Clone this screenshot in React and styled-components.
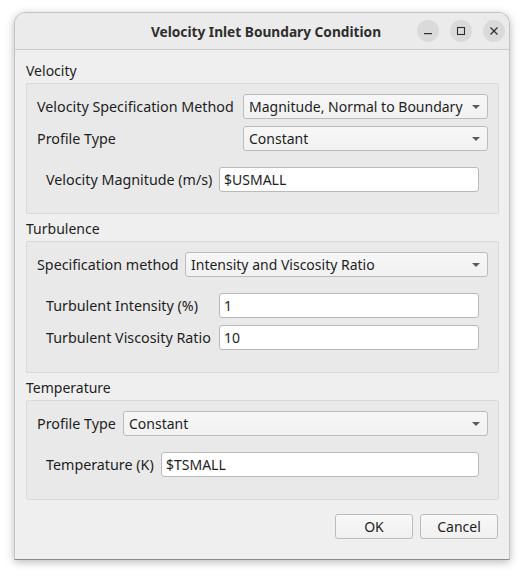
import React from "react";
import styled, { createGlobalStyle } from "styled-components";

const GlobalStyle = createGlobalStyle`
  html, body {
    margin: 0;
    padding: 0;
    background: #ffffff;
  }
  body {
    font-family: "Noto Sans", "DejaVu Sans", sans-serif;
    font-size: 14px;
    color: #1e1e1e;
  }
`;

const Screen = styled.div`
  padding: 12px 18px 17px 14px;
`;

const Window = styled.div`
  width: 496px;
  height: 548px;
  background: #efefef;
  border-radius: 12px 12px 0 0;
  border: 1px solid #c4c4c4;
  border-bottom-color: #8a8a8a;
  box-sizing: border-box;
  box-shadow: 0 2px 8px rgba(0, 0, 0, 0.28);
  display: flex;
  flex-direction: column;
  overflow: hidden;
`;

const TitleBar = styled.div`
  height: 36px;
  flex: none;
  background: #ebebeb;
  border-bottom: 1px solid #cdcdcd;
  position: relative;
  display: flex;
  align-items: center;
  justify-content: center;
`;

const Title = styled.div`
  font-weight: 700;
  font-size: 13.7px;
  color: #2e2e2e;
  margin-left: 8px;
`;

const Controls = styled.div`
  position: absolute;
  right: 4px;
  top: 7px;
  display: flex;
  gap: 11px;
`;

const CtrlButton = styled.div`
  width: 22px;
  height: 22px;
  border-radius: 50%;
  background: #dadada;
  display: flex;
  align-items: center;
  justify-content: center;
  color: #2e2e2e;
`;

const Body = styled.div`
  flex: 1;
  padding: 11px 10px 0 10px;
  display: flex;
  flex-direction: column;
`;

const SectionLabel = styled.div`
  height: 22px;
  line-height: 20px;
  padding-left: 1px;
`;

const Group = styled.div`
  background: #e9e9e9;
  border: 1px solid #d9d9d9;
  border-radius: 2px;
  margin: 0 0 5px 1px;
  padding: ${(p) => p.$pad || "10px 10px 10px 10px"};
  height: ${(p) => p.$h}px;
  box-sizing: border-box;
  display: flex;
  flex-direction: column;
`;

const Row = styled.div`
  display: flex;
  align-items: center;
  height: 25px;
  margin-bottom: ${(p) => p.$mb || 0}px;
  padding-left: ${(p) => p.$indent || 0}px;
  padding-right: ${(p) => p.$right || 0}px;
`;

const Label = styled.div`
  width: ${(p) => p.$w}px;
  flex: none;
  white-space: nowrap;
  font-size: 14.3px;
`;

const Combo = styled.div`
  flex: 1;
  height: 25px;
  box-sizing: border-box;
  border: 1px solid #bcbcbc;
  border-radius: 3px;
  background: linear-gradient(#f7f7f7, #f1f1f1);
  display: flex;
  align-items: center;
  padding: 0 6px 0 5px;
  justify-content: space-between;
`;

const Arrow = styled.div`
  width: 0;
  height: 0;
  border-left: 4px solid transparent;
  border-right: 4px solid transparent;
  border-top: 4px solid #5a5a5a;
  margin-right: 1px;
`;

const Input = styled.div`
  flex: 1;
  height: 25px;
  box-sizing: border-box;
  border: 1px solid #b9b9b9;
  border-radius: 3px;
  background: #ffffff;
  display: flex;
  align-items: center;
  padding-left: 4px;
`;

const Footer = styled.div`
  display: flex;
  justify-content: flex-end;
  gap: 7px;
  padding: 9px 1px 0 0;
`;

const Button = styled.div`
  width: 78px;
  height: 25px;
  box-sizing: border-box;
  border: 1px solid #bcbcbc;
  border-radius: 3px;
  background: linear-gradient(#f8f8f8, #f0f0f0);
  display: flex;
  align-items: center;
  justify-content: center;
`;

const ComboBox = ({ children }) => (
  <Combo>
    <span>{children}</span>
    <Arrow />
  </Combo>
);

export default function App() {
  return (
    <Screen>
      <GlobalStyle />
      <Window>
        <TitleBar>
          <Title>Velocity Inlet Boundary Condition</Title>
          <Controls>
            <CtrlButton>
              <svg width="10" height="10" viewBox="0 0 10 10">
                <rect x="1" y="7" width="8" height="1.2" fill="currentColor" />
              </svg>
            </CtrlButton>
            <CtrlButton>
              <svg width="10" height="10" viewBox="0 0 10 10">
                <rect x="1.5" y="1.5" width="7" height="7" fill="none" stroke="currentColor" strokeWidth="1.1" />
              </svg>
            </CtrlButton>
            <CtrlButton>
              <svg width="10" height="10" viewBox="0 0 10 10">
                <path d="M1.5 1.5 L8.5 8.5 M8.5 1.5 L1.5 8.5" stroke="currentColor" strokeWidth="1.2" />
              </svg>
            </CtrlButton>
          </Controls>
        </TitleBar>
        <Body>
          <SectionLabel>Velocity</SectionLabel>
          <Group $h={131} $pad="10px 10px 0 10px">
            <Row $mb={7}>
              <Label $w={206}>Velocity Specification Method</Label>
              <ComboBox>Magnitude, Normal to Boundary</ComboBox>
            </Row>
            <Row $mb={16}>
              <Label $w={206}>Profile Type</Label>
              <ComboBox>Constant</ComboBox>
            </Row>
            <Row $indent={9} $right={9}>
              <Label $w={173}>Velocity Magnitude (m/s)</Label>
              <Input>$USMALL</Input>
            </Row>
          </Group>
          <SectionLabel>Turbulence</SectionLabel>
          <Group $h={132} $pad="10px 10px 0 10px">
            <Row $mb={16}>
              <Label $w={148}>Specification method</Label>
              <ComboBox>Intensity and Viscosity Ratio</ComboBox>
            </Row>
            <Row $mb={7} $indent={9} $right={9}>
              <Label $w={173}>Turbulent Intensity (%)</Label>
              <Input>1</Input>
            </Row>
            <Row $indent={9} $right={9}>
              <Label $w={173}>Turbulent Viscosity Ratio</Label>
              <Input>10</Input>
            </Row>
          </Group>
          <SectionLabel>Temperature</SectionLabel>
          <Group $h={100} $pad="10px 10px 0 10px">
            <Row $mb={16}>
              <Label $w={86}>Profile Type</Label>
              <ComboBox>Constant</ComboBox>
            </Row>
            <Row $indent={9} $right={9}>
              <Label $w={115}>Temperature (K)</Label>
              <Input>$TSMALL</Input>
            </Row>
          </Group>
          <Footer>
            <Button>OK</Button>
            <Button>Cancel</Button>
          </Footer>
        </Body>
      </Window>
    </Screen>
  );
}
